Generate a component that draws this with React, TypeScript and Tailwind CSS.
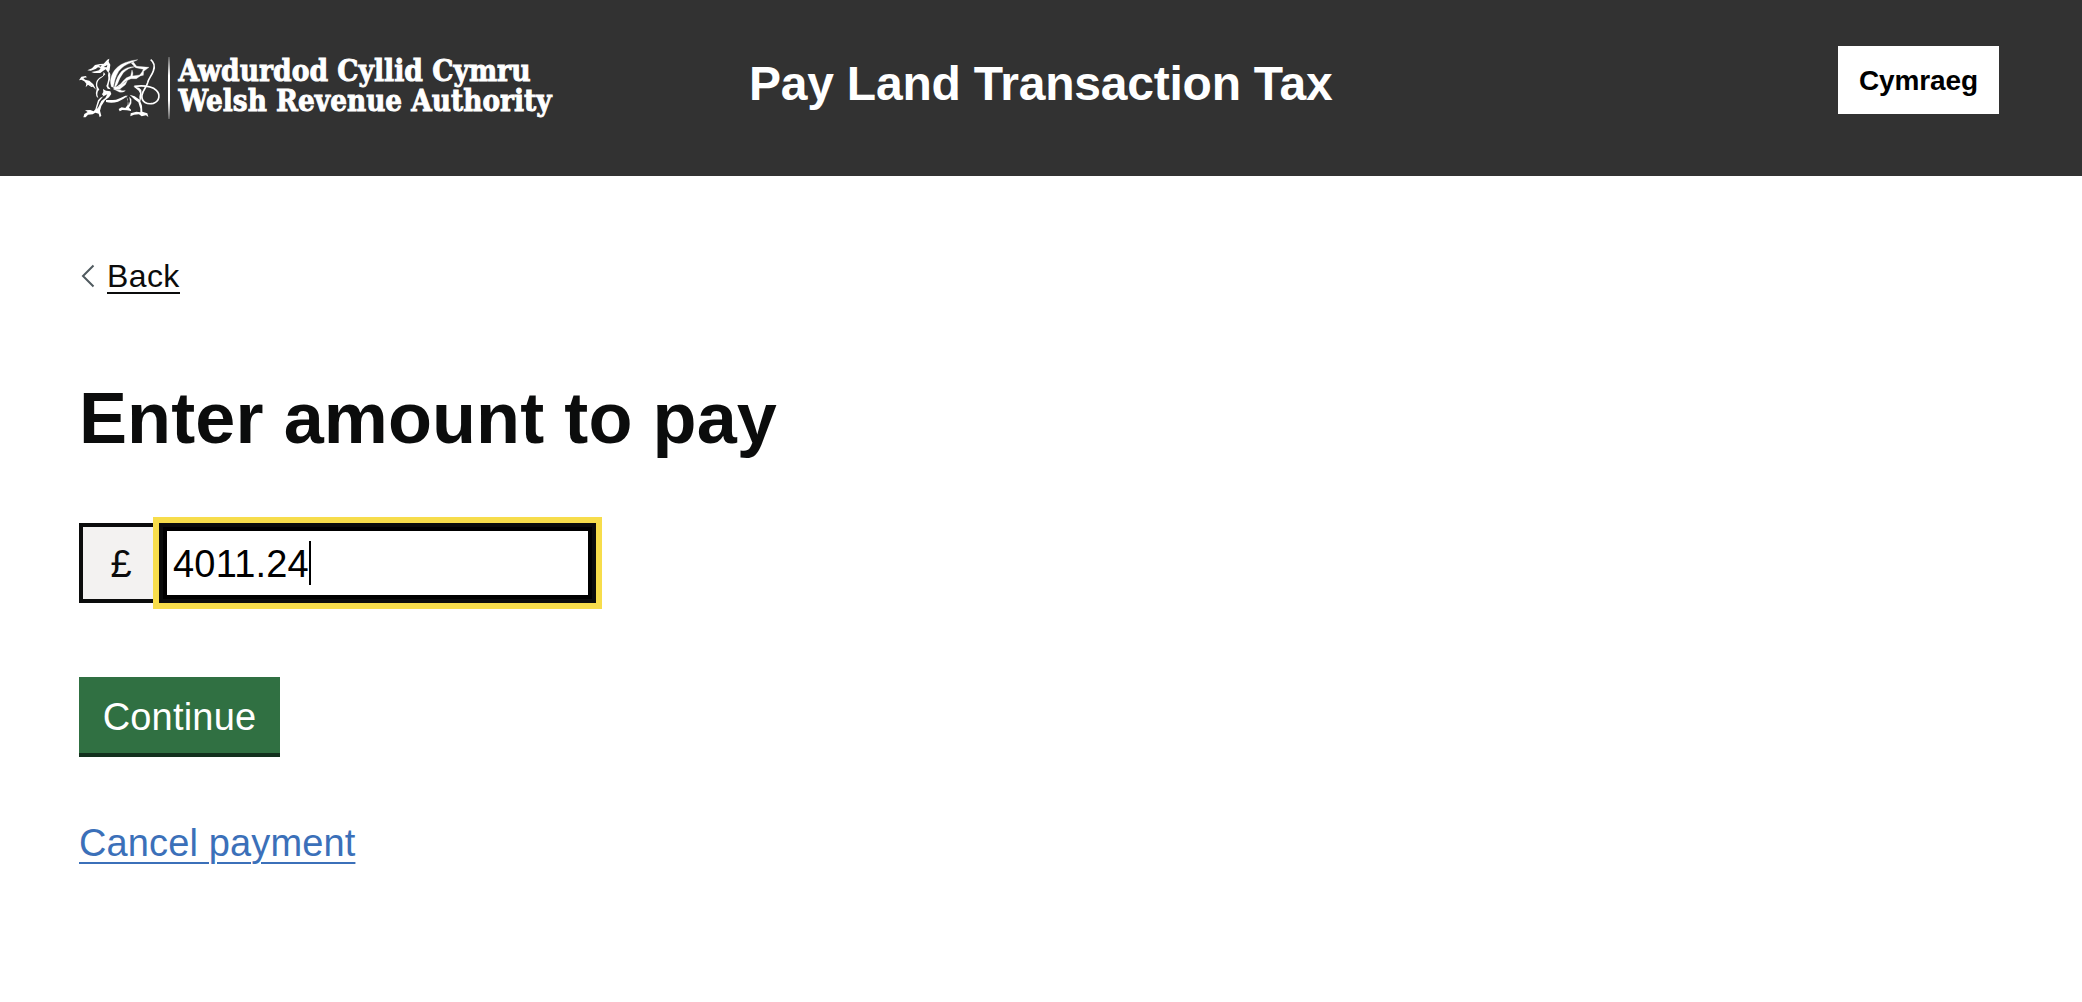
import React from "react";

function Logo() {
  return (
    <svg
      width="480"
      height="76"
      viewBox="70 50 480 76"
      className="block overflow-visible"
      role="img"
      aria-label="Awdurdod Cyllid Cymru, Welsh Revenue Authority"
    >
      <defs>
        <linearGradient id="rule" x1="0" y1="0" x2="0" y2="1">
          <stop offset="0" stopColor="#fff" stopOpacity="0.2" />
          <stop offset="0.3" stopColor="#fff" />
          <stop offset="0.7" stopColor="#fff" />
          <stop offset="1" stopColor="#fff" stopOpacity="0.2" />
        </linearGradient>
      </defs>
      <g transform="translate(70 50) scale(0.33333)" fill="#fff" stroke="none">
        {/* head */}
        <path d="M52 61 L66 55 L75 45 L90 42 L101 41 L112 29 L118 26 L116 35 L121 44 L119 60 L115 68 L107 58 L99 63 L91 69 L72 69 L64 66 L76 64 L87 61 L92 54 L84 52 L77 57 L62 62 Z" />
        <path d="M86 47 L95 45 L92 50 Z" fill="#323232" />
        <path d="M101 51 L112 45 L110 52 Z" fill="#323232" />
        {/* neck and chest */}
        <path d="M101 66 L106 73 Q100 80 89 87 Q80 96 82 108 L88 119 Q82 122 82 134 L85 145 L79 139 Q76 128 80 117 Q75 101 81 91 Q87 82 99 77 Z" />
        <path d="M116 63 L121 72 Q122 86 117 98 L115 109 L122 118 L113 116 L109 108 Q117 90 114 76 Z" />
        {/* raised foreleg */}
        <path d="M27 91 L34 80 L47 78 L51 82 L40 84 L45 89 L58 92 L70 103 L78 119 L66 108 L58 103 L69 111 L64 111 L54 104 L47 112 L49 101 L43 94 L34 89 Z" />
        {/* standing foreleg */}
        <path d="M99 117 L108 122 L121 124 L124 132 L117 142 L105 151 L94 168 L90 182 L94 197 L89 202 L86 191 L76 188 L68 193 L54 194 L47 202 L40 202 L43 192 L53 186 L45 181 L61 180 L71 184 L76 178 L84 151 L91 143 L101 139 L96 133 L100 126 Z" />
        <path d="M100 139 L112 133 L106 144 L94 153 L85 172 L80 178 L88 154 Z" fill="#323232" />
        {/* belly */}
        <path d="M108 150 Q124 151 138 149 Q150 145 166 137 L174 137 Q158 149 144 155 Q125 161 108 156 Z" />
        {/* wing */}
        <g stroke="#fff" strokeWidth="1">
          <path d="M124 110 Q117 89 129 68 Q140 48 165 38 Q184 31 203 29 L187 37 Q160 45 146 64 Q134 84 130 112 Z" />
          <path d="M190 36 L200 49 L237 52 L221 64 L220 76 L207 78 L216 66 L220 58 L197 53 L184 40 Z" />
          <path d="M196 50 Q174 53 160 68 Q148 84 142 103 L132 116 L136 100 Q142 78 155 64 Q170 49 196 50 Z" />
          <path d="M186 60 Q190 68 188 78 L216 74 L199 86 L183 86 Q164 92 152 108 L138 112 Q152 104 160 92 Q168 82 182 78 Z" />
          <path d="M130 112 L146 110 L154 104 L172 92 L166 104 L150 117 L134 118 Z" />
          {/* haunch */}
          <path d="M130 117 L150 119 Q158 124 166 122 Q160 128 148 126 Z" />
        </g>
        {/* rear legs */}
        <path d="M168 138 L174 149 L173 165 L166 174 L155 172 L146 177 L149 184 L157 180 L171 181 L183 183 L183 179 L177 173 L184 160 L184 148 L178 140 L180 154 L176 166 L174 154 Z" />
        <path d="M179 134 L193 148 L205 157 L211 176 L211 187 L199 185 L182 190 L181 199 L192 194 L207 193 L215 199 L228 196 L235 201 L232 190 L217 185 L216 167 L211 154 L215 138 L214 120 L207 113 L190 109 L206 122 L210 130 L208 141 L209 149 L194 139 Z" />
        {/* tail */}
        <path
          d="M242 29 Q258 41 250 63 C245 78 235 86 233 98 C230 112 219 119 216 135 C213 157 232 164 250 160 C270 154 271 132 259 121 C247 110 220 106 193 109"
          fill="none"
          stroke="#fff"
          strokeWidth="5"
        />
      </g>
      <rect x="168" y="57" width="2" height="62" fill="url(#rule)" />
      <g fill="#fff" stroke="#fff" strokeWidth="0.9" fontFamily="'DejaVu Serif', serif" fontWeight="700" fontSize="29.5">
        <text x="178.5" y="81" textLength="352" lengthAdjust="spacingAndGlyphs">Awdurdod Cyllid Cymru</text>
        <text x="178.5" y="111" textLength="373" lengthAdjust="spacingAndGlyphs">Welsh Revenue Authority</text>
      </g>
    </svg>
  );
}

export default function App() {
  return (
    <div className="min-h-[1002px] bg-white font-['Liberation_Sans',Arial,sans-serif] text-[#0b0c0c]">
      <header className="grid h-44 grid-cols-[671px_1fr_auto] items-start bg-[#323232] pr-[83px] pl-[79px] text-white">
        <div className="-ml-[9px] pt-[50px]">
          <Logo />
        </div>
        <p className="-ml-px pt-[56px] text-[48px] leading-[56px] font-bold tracking-[-0.22px] whitespace-nowrap">
          Pay Land Transaction Tax
        </p>
        <button className="mt-[46px] h-[68px] w-[161px] bg-white pt-px text-[28px] leading-none font-bold tracking-[-0.1px] text-black">
          Cymraeg
        </button>
      </header>

      <main className="flex flex-col items-start pl-[79px]">
        <a href="#" className="mt-[80px] flex h-[40px] items-center">
          <svg width="14" height="24" viewBox="0 0 14 24" className="ml-[2px] block" fill="none" stroke="#505a5f" strokeWidth="2">
            <path d="M12.5 1.5 L2 12 L12.5 22.5" />
          </svg>
          <span className="mb-[2px] ml-3 h-[38px] border-b-2 border-[#0b0c0c] text-[32px] leading-[40px] tracking-[0.4px]">Back</span>
        </a>

        <h1 className="mt-[82px] text-[72px] leading-[80px] font-bold tracking-[0.1px] whitespace-nowrap">
          Enter amount to pay
        </h1>

        <div className="mt-[65px] flex h-20">
          <div className="flex w-20 items-center justify-center border-4 border-r-0 border-[#0b0c0c] bg-[#f3f2f1] pt-[2px] text-[38px] leading-none">
            £
          </div>
          <div className="relative flex w-[437px] items-center border-4 border-[#0b0c0c] bg-white pl-[10px] text-[38px] leading-none text-black shadow-[inset_0_0_0_4px_#000,0_0_0_6px_#f7dd4b]">
            <span className="pt-[2px] tracking-[0.2px]">4011.24</span>
            <span className="h-11 w-[2px] bg-black" />
          </div>
        </div>

        <button className="mt-[74px] h-[80px] w-[201px] border-b-4 border-[#12301d] bg-[#307042] pt-1 text-[38px] leading-none tracking-[0.2px] text-white">
          Continue
        </button>

        <a
          href="#"
          className="mt-[61px] text-[38px] leading-[50px] tracking-[0.13px] whitespace-nowrap text-[#3b70b9] underline decoration-2 underline-offset-[6px]"
        >
          Cancel payment
        </a>
      </main>
    </div>
  );
}
